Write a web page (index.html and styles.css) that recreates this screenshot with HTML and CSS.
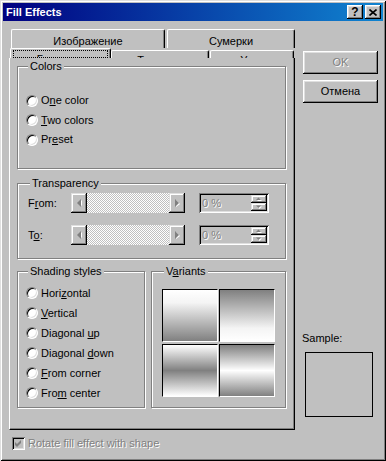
FILE: index.html
```html
<!DOCTYPE html>
<html lang="ru">
<head>
  <meta charset="utf-8">
  <title>Fill Effects</title>
  <link rel="stylesheet" href="styles.css">
</head>
<body>
  <div class="window">
    <!-- заголовок окна -->
    <div class="titlebar">
      <span class="title">Fill Effects</span>
      <div class="title-btns">
        <span class="tbtn">?</span>
        <span class="tbtn">
          <svg width="8" height="7" viewBox="0 0 8 7"><path d="M0.5 0.5L7.5 6.5M7.5 0.5L0.5 6.5" stroke="#000" stroke-width="1.6"/></svg>
        </span>
      </div>
    </div>

    <div class="client">
      <div class="left">
        <div class="tabs row1">
          <div class="tab tab-img">Изображение</div>
          <div class="tab tab-dusk">Сумерки</div>
        </div>
        <div class="tabs row2">
          <div class="tab active tab-grad"><div class="focus">Градиент</div></div>
          <div class="tab tab-tex">Текстура</div>
          <div class="tab tab-pat">Узор</div>
        </div>

        <div class="sheet">
          <fieldset class="grp colors">
            <legend>Colors</legend>
            <label class="radio"><span class="dot"></span><span>O<u>n</u>e color</span></label>
            <label class="radio"><span class="dot"></span><span><u>T</u>wo colors</span></label>
            <label class="radio"><span class="dot"></span><span>Pr<u>e</u>set</span></label>
          </fieldset>

          <fieldset class="grp transp">
            <legend>Transparency</legend>
            <div class="trow">
              <span class="tlabel">F<u>r</u>om:</span>
              <div class="slider">
                <span class="sbtn"><svg width="5" height="8" viewBox="0 0 5 8"><path d="M5 1L2 4L5 7Z" fill="#fff"/><path d="M4 0L0 4L4 8Z" fill="#808080"/></svg></span>
                <span class="track"></span>
                <span class="sbtn"><svg width="5" height="8" viewBox="0 0 5 8"><path d="M1 1L5 5L1 8Z" fill="#fff"/><path d="M0 0L4 4L0 8Z" fill="#808080"/></svg></span>
              </div>
              <div class="spin">
                <span class="val dis">0 %</span>
                <div class="spin-btns">
                  <span class="sbtn small"><svg width="6" height="4" viewBox="0 0 6 4"><path d="M1 4L3.5 1.5L6 4Z" fill="#fff"/><path d="M0 3L2.5 0.5L5 3Z" fill="#808080"/></svg></span>
                  <span class="sbtn small"><svg width="6" height="4" viewBox="0 0 6 4"><path d="M1 1.5L6 1.5L3.5 4Z" fill="#fff"/><path d="M0 0.5L5 0.5L2.5 3Z" fill="#808080"/></svg></span>
                </div>
              </div>
            </div>
            <div class="trow">
              <span class="tlabel">T<u>o</u>:</span>
              <div class="slider">
                <span class="sbtn"><svg width="5" height="8" viewBox="0 0 5 8"><path d="M5 1L2 4L5 7Z" fill="#fff"/><path d="M4 0L0 4L4 8Z" fill="#808080"/></svg></span>
                <span class="track"></span>
                <span class="sbtn"><svg width="5" height="8" viewBox="0 0 5 8"><path d="M1 1L5 5L1 8Z" fill="#fff"/><path d="M0 0L4 4L0 8Z" fill="#808080"/></svg></span>
              </div>
              <div class="spin">
                <span class="val dis">0 %</span>
                <div class="spin-btns">
                  <span class="sbtn small"><svg width="6" height="4" viewBox="0 0 6 4"><path d="M1 4L3.5 1.5L6 4Z" fill="#fff"/><path d="M0 3L2.5 0.5L5 3Z" fill="#808080"/></svg></span>
                  <span class="sbtn small"><svg width="6" height="4" viewBox="0 0 6 4"><path d="M1 1.5L6 1.5L3.5 4Z" fill="#fff"/><path d="M0 0.5L5 0.5L2.5 3Z" fill="#808080"/></svg></span>
                </div>
              </div>
            </div>
          </fieldset>

          <div class="bottom-grps">
            <fieldset class="grp shading">
              <legend>Shading styles</legend>
              <label class="radio r20"><span class="dot"></span><span>Hori<u>z</u>ontal</span></label>
              <label class="radio r20"><span class="dot"></span><span><u>V</u>ertical</span></label>
              <label class="radio r20"><span class="dot"></span><span>Diagonal <u>u</u>p</span></label>
              <label class="radio r20"><span class="dot"></span><span>Diagonal <u>d</u>own</span></label>
              <label class="radio r20"><span class="dot"></span><span><u>F</u>rom corner</span></label>
              <label class="radio r20"><span class="dot"></span><span>Fro<u>m</u> center</span></label>
            </fieldset>
            <fieldset class="grp variants">
              <legend>V<u>a</u>riants</legend>
              <div class="tiles">
                <div class="tile v1"></div>
                <div class="tile v2"></div>
                <div class="tile v3"></div>
                <div class="tile v4"></div>
              </div>
            </fieldset>
          </div>
        </div>

        <div class="rotate">
          <span class="cb"><svg width="7" height="7" viewBox="0 0 7 7"><path d="M0 2L2 4L6 0V3L2 7L0 5Z" fill="#808080"/></svg></span>
          <span class="dis">Rotate fill effect with shape</span>
        </div>
      </div>

      <div class="right">
        <button class="btn"><span class="dis">OK</span></button>
        <button class="btn">Отмена</button>
        <div class="sample-label">Sample:</div>
        <div class="sample"></div>
      </div>
    </div>
  </div>
</body>
</html>
```

FILE: styles.css
```css
/* классический диалог Windows */
* { margin: 0; padding: 0; box-sizing: border-box; }
body {
  font-family: "Liberation Sans", Arial, sans-serif;
  font-size: 11px;
  line-height: 13px;
  color: #000;
  background: #c0c0c0;
}
.window {
  width: 386px;
  height: 461px;
  padding: 3px;
  background: #c0c0c0;
  box-shadow: inset 1px 1px #dfdfdf, inset -1px -1px #000, inset 2px 2px #fff, inset -2px -2px #808080;
}
.titlebar {
  height: 18px;
  display: flex;
  align-items: center;
  justify-content: space-between;
  padding: 0 2px 0 3px;
  background: linear-gradient(to right, #000080, #1084d0);
}
.title {
  color: #fff;
  font-weight: bold;
}
.title-btns {
  display: flex;
  gap: 2px;
}
.tbtn {
  width: 16px;
  height: 14px;
  display: flex;
  align-items: center;
  justify-content: center;
  background: #c0c0c0;
  box-shadow: inset -1px -1px #000, inset 1px 1px #fff, inset -2px -2px #808080, inset 2px 2px #dfdfdf;
  font-weight: bold;
  font-size: 12px;
}

.client {
  display: flex;
  padding-left: 6px;
}
.left { width: 286px; }

/* вкладки */
.tabs { display: flex; }
.row1 {
  margin-top: 8px;
  height: 19px;
  gap: 2px;
  padding-left: 2px;
}
.tab {
  border: 1px solid #fff;
  border-bottom: none;
  border-right-color: #000;
  border-radius: 2px 2px 0 0;
  box-shadow: inset -1px 0 #808080;
  text-align: center;
  white-space: nowrap;
}
.row1 .tab { padding-top: 5px; }
.tab-img { width: 154px; }
.tab-dusk { width: 128px; }
.row2 {
  height: 10px;
  overflow: hidden;
  padding-left: 1px;
  align-items: flex-start;
}
.row2 .tab {
  height: 10px;
  margin-top: 2px;
  padding-top: 3px;
  overflow: hidden;
}
.row2 .tab.active {
  margin-top: 0;
  padding-top: 0;
}
.tab-grad { width: 101px; }
.tab-tex { width: 98px; }
.tab-pat { width: 84px; margin-left: 1px; }
.focus {
  margin: 1px 2px 0;
  height: 8px;
  padding-top: 2px;
  border: 1px dotted #000;
  overflow: hidden;
}

/* страница */
.sheet {
  height: 372px;
  padding: 2px 0 0 7px;
  border-left: 1px solid #fff;
  border-right: 1px solid #000;
  border-bottom: 1px solid #000;
  box-shadow: inset -1px -1px #808080;
}
.grp {
  border: 1px solid #808080;
  box-shadow: 1px 1px #fff, inset 1px 1px #fff;
  min-width: 0;
  width: 269px;
}
.grp legend {
  margin-left: 2px;
  padding: 0 2px;
  background: #c0c0c0;
  line-height: 13px;
}
.colors {
  height: 109px;
  padding: 18px 0 0 8px;
}
.radio {
  display: flex;
  align-items: center;
  height: 19.5px;
  white-space: pre;
}
.radio.r20 { height: 20px; }
.dot {
  width: 12px;
  height: 12px;
  margin-right: 3px;
  border-radius: 50%;
  background: #fff;
  border: 1px solid;
  border-color: #808080 #fff #fff #808080;
  box-shadow: inset 1px 1px #000, inset -1px -1px #dfdfdf;
}

.transp {
  margin-top: 8px;
  height: 82px;
  padding: 3px 0 0 10px;
}
.trow {
  display: flex;
  align-items: center;
  height: 20px;
}
.trow + .trow { margin-top: 12px; }
.tlabel { width: 43px; }
.slider {
  width: 114px;
  height: 20px;
  display: flex;
}
.sbtn {
  width: 16px;
  height: 20px;
  display: flex;
  align-items: center;
  justify-content: center;
  background: #c0c0c0;
  box-shadow: inset -1px -1px #000, inset 1px 1px #dfdfdf, inset -2px -2px #808080, inset 2px 2px #fff;
}
.sbtn.small { height: 8px; }
.track {
  flex: 1;
  background: repeating-conic-gradient(#fff 0 25%, #c0c0c0 0 50%) 0 0 / 2px 2px;
}
.spin {
  width: 70px;
  height: 20px;
  margin-left: 14px;
  display: flex;
  padding: 2px;
  box-shadow: inset 1px 1px #808080, inset -1px -1px #fff, inset 2px 2px #000, inset -2px -2px #dfdfdf;
}
.spin .val {
  flex: 1;
  padding: 2px 0 0 1px;
}
.spin-btns {
  display: flex;
  flex-direction: column;
}

.bottom-grps {
  display: flex;
  gap: 6px;
  margin-top: 6px;
}
.shading {
  width: 128px;
  height: 143px;
  padding: 5px 0 0 8px;
}
.variants {
  width: 135px;
  height: 143px;
  padding: 11px 0 0 10px;
}
.tiles {
  display: grid;
  grid-template-columns: 56px 56px;
  grid-auto-rows: 53px;
  column-gap: 1px;
  row-gap: 2px;
}
.tile {
  border: 1px solid;
  border-color: #000 #fff #fff #000;
}
.v1 { background: linear-gradient(#fff 0%, #f4f4f4 25%, #808080 100%); }
.v2 { background: linear-gradient(#808080 0%, #f4f4f4 75%, #fff 100%); }
.v3 { background: linear-gradient(#fff 0%, #808080 50%, #fff 100%); }
.v4 { background: linear-gradient(#808080 0%, #fff 50%, #808080 100%); }

.rotate {
  display: flex;
  align-items: center;
  height: 13px;
  margin: 7px 0 0 3px;
}
.cb {
  width: 13px;
  height: 13px;
  margin-right: 3px;
  display: flex;
  align-items: center;
  justify-content: center;
  background: #c0c0c0;
  box-shadow: inset 1px 1px #808080, inset -1px -1px #fff, inset 2px 2px #000, inset -2px -2px #dfdfdf;
}
.dis {
  color: #808080;
  text-shadow: 1px 1px #fff;
}

/* кнопки справа */
.right {
  width: 75px;
  margin-left: 8px;
  padding-top: 30px;
}
.btn {
  display: block;
  width: 75px;
  height: 23px;
  font: inherit;
  color: #000;
  background: #c0c0c0;
  border: none;
  box-shadow: inset -1px -1px #000, inset 1px 1px #fff, inset -2px -2px #808080, inset 2px 2px #dfdfdf;
}
.btn + .btn { margin-top: 6px; }
.sample-label {
  margin: 229px 0 0 -1px;
}
.sample {
  width: 68px;
  height: 65px;
  margin: 7px 0 0 2px;
  border: 1px solid #000;
}
```
